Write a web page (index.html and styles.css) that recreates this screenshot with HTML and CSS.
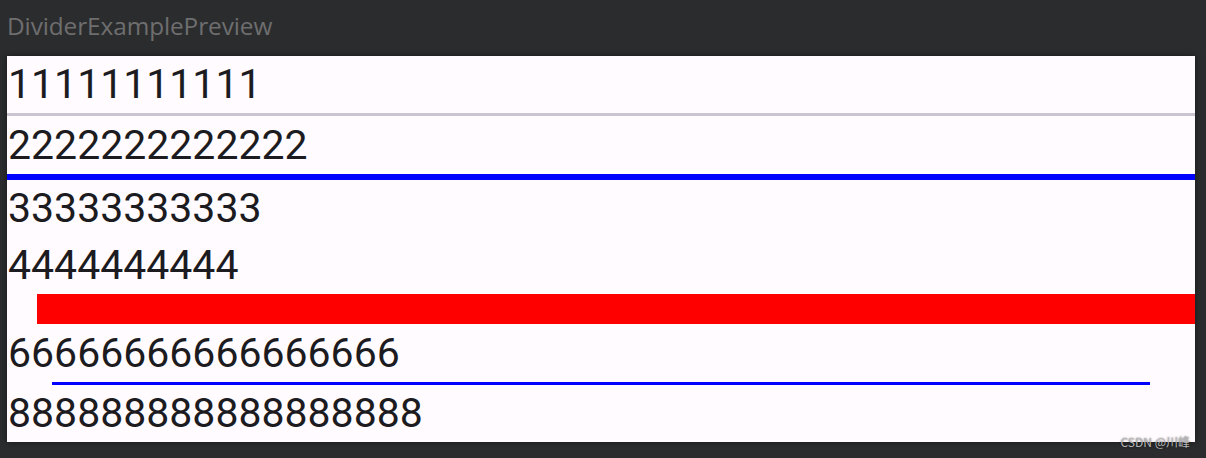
FILE: index.html
```html
<!DOCTYPE html>
<html>
<head>
<meta charset="utf-8">
<link rel="stylesheet" href="styles.css">
</head>
<body>
<div class="title">DividerExamplePreview</div>
<div class="preview">
  <div class="row">11111111111</div>
  <div class="div-gray"></div>
  <div class="row r58">2222222222222</div>
  <div class="div-blue-thick"></div>
  <div class="row">33333333333</div>
  <div class="row">4444444444</div>
  <div class="div-red"></div>
  <div class="row r58">66666666666666666</div>
  <div class="div-blue-thin"></div>
  <div class="row">888888888888888888</div>
</div>
<div class="watermark">CSDN @川峰</div>
</body>
</html>
```
FILE: styles.css
```css
html, body {
  margin: 0;
  padding: 0;
}
body {
  background: #2b2c2e;
  width: 1206px;
  height: 458px;
  overflow: hidden;
  position: relative;
}
.title {
  height: 56px;
  box-sizing: border-box;
  padding: 10px 0 0 7px;
  font-family: "Open Sans", "Noto Sans", sans-serif;
  font-size: 24.4px;
  line-height: 32px;
  color: #6e6e6e;
  letter-spacing: -0.1px;
}
.preview {
  margin-left: 7px;
  width: 1188px;
  height: 386px;
  background: #fffbfe;
  box-shadow: 0 0 6px rgba(0, 0, 0, 0.45);
  display: flex;
  flex-direction: column;
}
.row {
  height: 57px;
  line-height: 57px;
  font-family: Roboto, "Liberation Sans", sans-serif;
  font-size: 41px;
  color: #1c1b1f;
  padding-left: 1px;
  white-space: nowrap;
}
.row.r58 {
  height: 58px;
  line-height: 58px;
}
.div-gray {
  height: 3px;
  background: #cac4d0;
}
.div-blue-thick {
  height: 6px;
  background: #0000ff;
}
.div-red {
  height: 30px;
  margin-left: 30px;
  background: #ff0000;
}
.div-blue-thin {
  height: 3px;
  margin-left: 45px;
  margin-right: 45px;
  background: #0000ff;
}
.watermark {
  position: absolute;
  right: 16px;
  bottom: 9px;
  font-family: "Noto Sans CJK SC", "Noto Sans", sans-serif;
  font-size: 12px;
  line-height: 14px;
  color: #b8b8b8;
  text-shadow: 0 0 2px rgba(0, 0, 0, 0.6);
}
```
